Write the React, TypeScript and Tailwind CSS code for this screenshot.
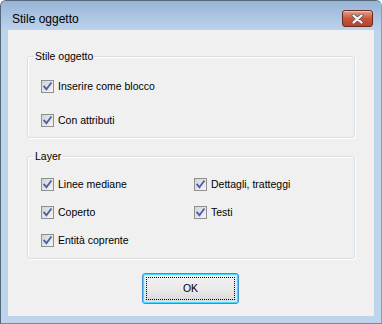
import { type ReactNode } from 'react'

/* ── Case à cocher style Windows 7 ───────────────────────────────── */

function CheckBox({ label }: { label: string }) {
  return (
    <label className="flex items-center gap-[4px] h-[13px] leading-none">
      <span className="relative w-[13px] h-[13px] shrink-0 border border-[#8e8f8f] bg-gradient-to-br from-[#d4d4d4] to-[#f4f4f4]">
        <svg viewBox="0 0 11 11" className="absolute inset-0 w-[11px] h-[11px]">
          <path
            d="M2.2 5.6 L4.4 8.2 L8.9 2.2"
            fill="none"
            stroke="#4a5fa8"
            strokeWidth="1.8"
            strokeLinecap="square"
          />
        </svg>
      </span>
      <span className="text-[10.5px] text-black whitespace-nowrap">{label}</span>
    </label>
  )
}

/* ── Cadre de groupe ─────────────────────────────────────────────── */

function GroupBox({ title, className, children }: { title: string; className: string; children: ReactNode }) {
  return (
    <div
      className={`relative border border-[#d5dfe5] rounded-[3px] shadow-[inset_1px_1px_0_#ffffff,1px_1px_0_#ffffff] ${className}`}
    >
      <span className="absolute left-[6px] top-[-8px] px-[1px] bg-[#f0f0f0] text-[10.5px] leading-[14px] text-black">
        {title}
      </span>
      {children}
    </div>
  )
}

/* ── Dialogue principal ──────────────────────────────────────────── */

export default function App() {
  return (
    <div
      className="w-[382px] h-[324px] flex flex-col rounded-t-[6px] border border-[#55677b] border-b-[#3f9fc0] border-r-[#4fb6d8] bg-[#bed4eb] overflow-hidden"
      style={{ fontFamily: '"Liberation Sans", Arial, sans-serif' }}
    >
      {/* Barre de titre */}
      <div className="h-[29px] shrink-0 flex items-start justify-between bg-gradient-to-b from-[#98b5d6] to-[#bcd3ed] pl-[11px] pr-[8px]">
        <span className="mt-[11px] text-[12px] leading-[14px] text-black">Stile oggetto</span>
        <button className="mt-[9px] w-[31px] h-[17px] rounded-[3px] border border-[#6b2a1f] bg-gradient-to-b from-[#e0a08d] via-[#c9573d] to-[#b8432a] shadow-[inset_0_1px_0_#f0c2b4] flex items-center justify-center">
          <svg viewBox="0 0 14 11" className="w-[13px] h-[10px]">
            <path d="M2.5 1.5 L11.5 9.5 M11.5 1.5 L2.5 9.5" stroke="#5a4a48" strokeWidth="4" strokeLinecap="round" />
            <path d="M2.5 1.5 L11.5 9.5 M11.5 1.5 L2.5 9.5" stroke="#f4f4f4" strokeWidth="2.4" strokeLinecap="round" />
          </svg>
        </button>
      </div>

      {/* Zone client */}
      <div className="flex-1 mx-[7px] mb-[7px] bg-[#f0f0f0] flex flex-col px-[19px] pt-[26px]">
        <GroupBox title="Stile oggetto" className="h-[82px] pt-[23px] pl-[13px]">
          <div className="flex flex-col gap-[21px]">
            <CheckBox label="Inserire come blocco" />
            <CheckBox label="Con attributi" />
          </div>
        </GroupBox>

        <GroupBox title="Layer" className="mt-[18px] h-[103px] pt-[21px] pl-[13px]">
          <div className="grid grid-cols-[153px_1fr] gap-y-[15px]">
            <CheckBox label="Linee mediane" />
            <CheckBox label="Dettagli, tratteggi" />
            <CheckBox label="Coperto" />
            <CheckBox label="Testi" />
            <CheckBox label="Entità coprente" />
          </div>
        </GroupBox>

        <div className="flex justify-center mt-[14px] pr-[1px]">
          <button className="relative w-[97px] h-[31px] rounded-[3px] border border-[#3c8fd1] shadow-[inset_0_0_0_1px_#48d8fb,inset_0_0_0_2px_#c4eefc] bg-gradient-to-b from-[#f2f2f2] via-[#ebebeb] to-[#d6d6d6] text-[10.5px] text-black">
            <span className="absolute inset-[3px] border border-dotted border-black rounded-[1px]" />
            OK
          </button>
        </div>
      </div>
    </div>
  )
}
